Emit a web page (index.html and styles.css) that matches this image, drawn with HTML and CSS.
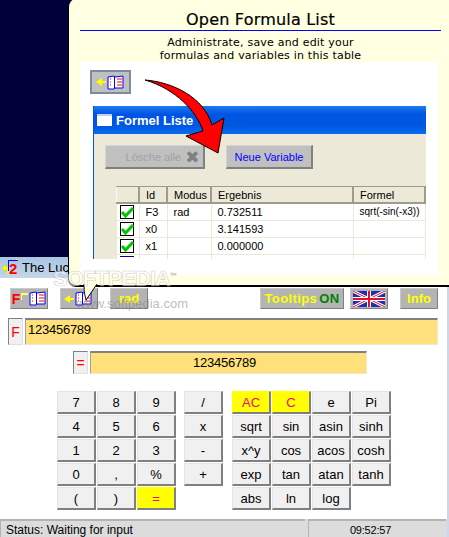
FILE: index.html
```html
<!DOCTYPE html>
<html lang="en">
<head>
    <meta charset="UTF-8">
    <title>The Lucent Calculator</title>
    <link rel="stylesheet" href="styles.css">
</head>
<body>
    <svg width="0" height="0" class="defs">
        <defs>
            <symbol id="book" viewBox="0 0 17 15">
                <path d="M1 2 L7 1 L8 2 L16 1 V13 H8 L7 14 L1 14 Z" fill="#fff" stroke="#0000ff" stroke-width="1"/>
                <path d="M7.5 1.5 V14" stroke="#0000ff"/>
                <path d="M3 4h2M3 7h2M3 10h2" stroke="#ff0000" stroke-dasharray="1 1"/>
                <path d="M10 4h5M10 7h5M10 10h5" stroke="#ff0000"/>
            </symbol>
            <symbol id="check" viewBox="0 0 14 14">
                <rect x="0.5" y="0.5" width="13" height="13" fill="#fff" stroke="#000"/>
                <path d="M2 7 L5.5 11 L13 3" fill="none" stroke="#00c800" stroke-width="3"/>
            </symbol>
        </defs>
    </svg>

    <div class="desktop"></div>

    <div class="app">
        <div class="titlebar">
            <svg class="app-icon" width="16" height="17" viewBox="0 0 16 17">
                <path d="M0 9 L4 5 V13 Z" fill="#ffff00" stroke="#c8c800" stroke-width="0.5"/>
                <path d="M4 9 H6 V15" fill="none" stroke="#ffff00" stroke-width="1.5"/>
                <path d="M6 1.5 H16" stroke="#0000ff"/>
                <path d="M6.5 1.5 V12" stroke="#0000ff"/>
                <path d="M14 0.5 H16" stroke="#ffff00"/>
                <text x="7" y="15" class="app-icon-two">2</text>
            </svg>
            <span>The Lucent</span>
        </div>

        <div class="toolbar">
            <div class="tool tool-f">
                <b class="red-f">F</b><i class="spark"></i>
                <svg class="book" width="17" height="15"><use href="#book"/></svg>
            </div>
            <div class="tool tool-arrow">
                <span class="yellow-arrow"></span>
                <svg class="book" width="17" height="15"><use href="#book"/></svg>
            </div>
            <div class="tool tool-text">rad</div>
            <div class="tool tool-tips">Tooltips<span class="on">ON</span></div>
            <div class="tool tool-flag">
                <svg width="32" height="16" viewBox="0 0 32 16">
                    <rect width="32" height="16" fill="#1f2fb0"/>
                    <path d="M0 0 L32 16 M32 0 L0 16" stroke="#fff" stroke-width="3"/>
                    <path d="M0 0 L32 16 M32 0 L0 16" stroke="#e01030" stroke-width="1"/>
                    <path d="M16 0 V16 M0 8 H32" stroke="#fff" stroke-width="4"/>
                    <path d="M16 0 V16 M0 8 H32" stroke="#e01030" stroke-width="2"/>
                </svg>
            </div>
            <div class="tool tool-text tool-info">Info</div>
        </div>

        <div class="formula-row">
            <div class="tag tag-f">F</div>
            <div class="field">123456789</div>
        </div>

        <div class="result-row">
            <div class="tag tag-eq">=</div>
            <div class="field field-result">123456789</div>
        </div>

        <div class="keypad">
            <div class="keys keys-num">
                <div class="key">7</div><div class="key">8</div><div class="key">9</div>
                <div class="key">4</div><div class="key">5</div><div class="key">6</div>
                <div class="key">1</div><div class="key">2</div><div class="key">3</div>
                <div class="key">0</div><div class="key">,</div><div class="key">%</div>
                <div class="key">(</div><div class="key">)</div><div class="key key-hot">=</div>
            </div>
            <div class="keys keys-op">
                <div class="key">/</div>
                <div class="key">x</div>
                <div class="key">-</div>
                <div class="key">+</div>
            </div>
            <div class="keys keys-fn">
                <div class="key key-hot">AC</div><div class="key key-hot">C</div><div class="key">e</div><div class="key">Pi</div>
                <div class="key">sqrt</div><div class="key">sin</div><div class="key">asin</div><div class="key">sinh</div>
                <div class="key">x^y</div><div class="key">cos</div><div class="key">acos</div><div class="key">cosh</div>
                <div class="key">exp</div><div class="key">tan</div><div class="key">atan</div><div class="key">tanh</div>
                <div class="key">abs</div><div class="key">ln</div><div class="key">log</div>
            </div>
        </div>

        <div class="statusbar">
            <div class="status-main">Status: Waiting for input</div>
            <div class="status-time">09:52:57</div>
        </div>
    </div>

    <!-- help balloon lies over the app window -->
    <div class="balloon">
        <h1>Open Formula List</h1>
        <p>Administrate, save and edit your<br>formulas and variables in this table</p>
        <div class="shot">
            <div class="shot-btn">
                <span class="yellow-arrow"></span>
                <svg class="book" width="17" height="15"><use href="#book"/></svg>
            </div>
            <div class="mini-window">
                <div class="mini-title"><i class="mini-icon"></i>Formel Liste</div>
                <div class="mini-body">
                    <div class="mini-actions">
                        <div class="mini-btn mini-clear">Lösche alle <b>&#10006;</b></div>
                        <div class="mini-btn mini-new">Neue Variable</div>
                    </div>
                    <table class="mini-table">
                        <tr>
                            <th class="col-check"></th>
                            <th class="col-id">Id</th>
                            <th class="col-mode">Modus</th>
                            <th class="col-result">Ergebnis</th>
                            <th>Formel</th>
                        </tr>
                        <tr>
                            <td class="cell-check"><svg width="14" height="14"><use href="#check"/></svg></td>
                            <td>F3</td><td>rad</td><td>0.732511</td><td class="cell-formula">sqrt(-sin(-x3))</td>
                        </tr>
                        <tr>
                            <td class="cell-check"><svg width="14" height="14"><use href="#check"/></svg></td>
                            <td>x0</td><td></td><td>3.141593</td><td></td>
                        </tr>
                        <tr>
                            <td class="cell-check"><svg width="14" height="14"><use href="#check"/></svg></td>
                            <td>x1</td><td></td><td>0.000000</td><td></td>
                        </tr>
                        <tr>
                            <td class="cell-check"><i class="cut-check"></i></td>
                            <td></td><td></td><td></td><td></td>
                        </tr>
                    </table>
                </div>
            </div>
        </div>
        <svg class="pointer" width="30" height="18" viewBox="0 0 30 18">
            <path d="M0 0 H14 L14 1 C14 8 15 12 16 16 L27 0" fill="#ffffe1" stroke="none"/>
            <path d="M14 0 C14 8 15 12 16 16 L27 0" fill="#ffffe1" stroke="#000"/>
        </svg>
        <svg class="red-arrow" width="90" height="85" viewBox="0 0 90 85">
            <path d="M1 1 C28 3 60 18 68 46 L80 39 L74 74 L42 57 L59 52 C53 33 32 10 1 1 Z" fill="#ff0000" stroke="#000"/>
        </svg>
    </div>

    <div class="watermark">SOFTPEDIA<sup>™</sup></div>
    <div class="watermark-url">www.softpedia.com</div>
</body>
</html>
```

FILE: styles.css
```css
html, body {
    margin: 0;
    padding: 0;
}
body {
    position: relative;
    width: 449px;
    height: 537px;
    overflow: hidden;
    background-color: #ffffff;
    font-family: "Liberation Sans", Arial, sans-serif;
    font-size: 12px;
    color: #000000;
}
.defs {
    position: absolute;
}
.desktop {
    height: 257px;
    background-color: #00003a;
}
.app {
    height: 280px;
    display: flex;
    flex-direction: column;
    box-sizing: border-box;
    border-right: 2px solid #c9d9ea;
}
.titlebar {
    height: 21px;
    display: flex;
    align-items: center;
    gap: 4px;
    padding-left: 2px;
    background: linear-gradient(#a9c6e4, #c4d6e9);
    font-size: 13px;
}
.app-icon-two {
    fill: #ff0000;
    font-family: "Liberation Sans", sans-serif;
    font-weight: bold;
    font-size: 15px;
}
.toolbar {
    display: flex;
    height: 21px;
    margin-top: 10px;
    padding-left: 10px;
}
.tool {
    box-sizing: border-box;
    width: 38px;
    height: 21px;
    margin-right: 12px;
    display: flex;
    align-items: center;
    justify-content: center;
    background-color: #b4b4b4;
    border: 1px solid;
    border-color: #c8c8c8 #808080 #808080 #c8c8c8;
    font-weight: bold;
    font-size: 13px;
    color: #ffff00;
}
.tool-tips {
    width: 84px;
    margin-left: 100px;
    margin-right: 6px;
    letter-spacing: 0.4px;
}
.tool-flag {
    margin-right: 12px;
}
.on {
    margin-left: 2px;
    color: #008000;
}
.tool-info {
    margin-right: 0;
}
.red-f {
    font-size: 14px;
    color: #ff0000;
}
.spark {
    width: 6px;
    height: 5px;
    margin: 0 1px 5px 1px;
    border-top: 2px solid #ffff66;
    border-left: 1px solid #ffff66;
}
.yellow-arrow {
    position: relative;
    width: 8px;
    height: 2px;
    margin-right: 1px;
    background-color: #ffff00;
}
.yellow-arrow::before {
    content: "";
    position: absolute;
    left: -2px;
    top: -3px;
    border: 4px solid transparent;
    border-left: 0;
    border-right: 6px solid #ffff00;
}
.formula-row {
    display: flex;
    gap: 2px;
    height: 27px;
    margin: 9px 9px 0 8px;
}
.result-row {
    display: flex;
    gap: 2px;
    height: 23px;
    margin: 6px 80px 0 73px;
}
.tag {
    box-sizing: border-box;
    width: 15px;
    display: flex;
    align-items: center;
    justify-content: center;
    background-color: #f0f0f0;
    border: 1px solid;
    border-color: #808080 #e0e0e0 #e0e0e0 #808080;
    color: #ff0000;
    font-size: 14px;
}
.field {
    flex: 1;
    box-sizing: border-box;
    padding: 0 0 5px 2px;
    display: flex;
    align-items: center;
    background-color: #ffe07a;
    border-top: 2px solid #808080;
    border-left: 1px solid #a0a0a0;
    border-right: 1px solid #f0e8d0;
    border-bottom: 1px solid #f0e8d0;
    font-size: 13px;
    letter-spacing: -0.25px;
}
.field-result {
    justify-content: center;
    padding: 0 8px 2px 0;
}
.keypad {
    display: flex;
    margin: 17px 0 0 57px;
}
.keys {
    display: grid;
    grid-auto-rows: 23px;
    gap: 1px;
}
.keys-num {
    grid-template-columns: repeat(3, 39px);
}
.keys-op {
    grid-template-columns: 39px;
    align-self: start;
    margin-left: 8px;
}
.keys-fn {
    grid-template-columns: repeat(4, 39px);
    margin-left: 9px;
}
.key {
    box-sizing: border-box;
    display: flex;
    align-items: center;
    justify-content: center;
    background-color: #f0f0f0;
    border: 1px solid;
    border-color: #e4e4e4 #808080 #808080 #e4e4e4;
    border-right-width: 2px;
    border-bottom-width: 2px;
    font-size: 13px;
}
.key-hot {
    background-color: #ffff00;
    border-top-color: #ffff00;
    border-left-color: #ffff00;
    color: #ff0080;
}
.statusbar {
    display: flex;
    gap: 3px;
    height: 18px;
    margin-top: auto;
    padding-right: 1px;
    background-color: #dcdcdc;
    font-size: 12px;
}
.status-main, .status-time {
    box-sizing: border-box;
    border-top: 2px solid #b4b4b4;
    border-left: 1px solid #b4b4b4;
    line-height: 18px;
}
.status-main {
    width: 305px;
    padding-left: 5px;
}
.status-time {
    flex: 1;
    padding-right: 14px;
    text-align: center;
    font-size: 11px;
    letter-spacing: -0.2px;
}

/* help balloon */
.balloon {
    position: absolute;
    left: 68px;
    top: -1px;
    width: 390px;
    height: 288px;
    box-sizing: border-box;
    padding: 1px 0 0 11px;
    background-color: #ffffe1;
    border: 1px solid #000000;
    border-width: 0 0 2px 1px;
    border-bottom-left-radius: 8px;
    border-top-left-radius: 8px;
    font-family: "DejaVu Sans", sans-serif;
}
.balloon h1 {
    width: 361px;
    margin: 0;
    padding: 10px 0 1px;
    border-bottom: 1px solid #0000ff;
    text-align: center;
    font-size: 16px;
    line-height: 19px;
    font-weight: normal;
    letter-spacing: 0.2px;
    -webkit-text-stroke: 0.2px #000;
}
.balloon p {
    width: 361px;
    margin: 5px 0 0;
    text-align: center;
    font-size: 11px;
    line-height: 13px;
    letter-spacing: 0.2px;
}
.shot {
    width: 358px;
    height: 213px;
    margin-top: 0;
    padding-top: 8px;
    box-sizing: border-box;
    background-color: #ffffff;
}
.shot-btn {
    box-sizing: border-box;
    width: 41px;
    height: 24px;
    margin-left: 10px;
    display: flex;
    align-items: center;
    justify-content: center;
    background-color: #c0c0c0;
    border: 2px solid #7f8a9c;
}
.mini-window {
    width: 333px;
    margin: 12px 0 0 13px;
    box-sizing: border-box;
    border-left: 1px solid #0054e3;
}
.mini-title {
    display: flex;
    align-items: center;
    height: 28px;
    padding-left: 3px;
    background: linear-gradient(#1c7cf0, #0054e3 30%, #0058e0 70%, #0a6cf0);
    color: #ffffff;
    font-family: "Liberation Sans", sans-serif;
    font-weight: bold;
    font-size: 13px;
}
.mini-icon {
    width: 15px;
    height: 10px;
    margin-right: 4px;
    background-color: #ffffff;
    border-top: 2px solid #bcd4f4;
}
.mini-body {
    height: 125px;
    background-color: #ece9d8;
    overflow: hidden;
    font-family: "Liberation Sans", sans-serif;
}
.mini-actions {
    display: flex;
    gap: 21px;
    padding: 11px 0 0 11px;
}
.mini-btn {
    box-sizing: border-box;
    height: 24px;
    display: flex;
    align-items: center;
    justify-content: center;
    background-color: #c0c0c0;
    border: 1px solid;
    border-color: #d4d4d4 #808080 #808080 #d4d4d4;
    border-right-width: 2px;
    border-bottom-width: 2px;
    font-size: 11px;
}
.mini-clear {
    width: 100px;
    padding-left: 16px;
    color: #a0a0a0;
}
.mini-clear b {
    margin-left: 4px;
    font-family: "DejaVu Sans", sans-serif;
    font-size: 17px;
    line-height: 18px;
    color: #808080;
}
.mini-new {
    width: 87px;
    color: #0000ff;
}
.mini-table {
    width: 310px;
    margin: 17px 0 0 22px;
    border-collapse: collapse;
    table-layout: fixed;
    background-color: #ffffff;
    font-size: 11px;
}
.mini-table th {
    height: 15px;
    padding: 0 0 0 6px;
    background-color: #ece9d8;
    border: 1px solid;
    border-color: #a09c8c #a09c8c #a09c8c #f8f8f0;
    border-bottom-width: 2px;
    border-right-width: 2px;
    text-align: left;
    font-weight: normal;
}
.mini-table td {
    height: 16px;
    padding: 0 0 0 6px;
    border: 1px solid #ece9d8;
    white-space: nowrap;
    line-height: 14px;
}
.mini-table .cell-check {
    padding-left: 3px;
}
.mini-table .cell-formula {
    font-size: 10px;
}
.mini-table td svg {
    display: block;
}
.cut-check {
    display: block;
    width: 14px;
    height: 14px;
    box-sizing: border-box;
    border-top: 1px solid #0000a0;
}
.col-check { width: 15px; }
.col-id { width: 20px; }
.col-mode { width: 36px; }
.col-result { width: 134px; }
.pointer {
    position: absolute;
    left: 1px;
    top: 285px;
    margin-left: 0;
}
.red-arrow {
    position: absolute;
    left: 75px;
    top: 80px;
}
.watermark {
    position: absolute;
    left: 53px;
    top: 266px;
    color: rgba(255, 255, 255, 0.5);
    -webkit-text-stroke: 0.6px rgba(170, 170, 170, 0.6);
    font-family: "Liberation Sans", sans-serif;
    font-weight: bold;
    font-size: 22px;
    letter-spacing: -1px;
}
.watermark sup {
    font-size: 7px;
    letter-spacing: 0;
}
.watermark-url {
    position: absolute;
    left: 76px;
    top: 296px;
    color: rgba(130, 130, 130, 0.55);
    font-family: "Liberation Sans", sans-serif;
    font-size: 13px;
}
```
